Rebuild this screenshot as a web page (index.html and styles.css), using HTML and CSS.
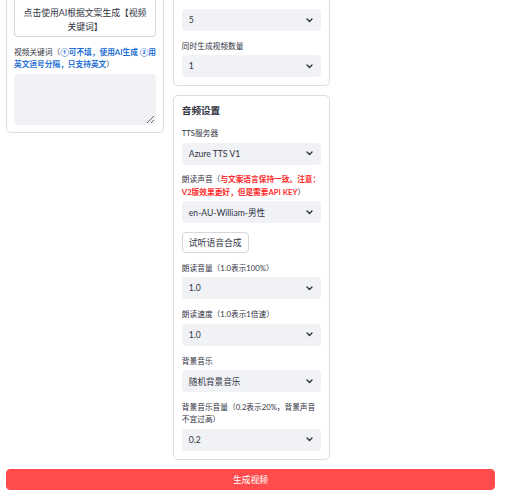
FILE: index.html
```html
<!DOCTYPE html>
<html lang="zh">
<head>
<meta charset="utf-8">
<title>视频生成</title>
<link rel="stylesheet" href="styles.css">
</head>
<body>
<div class="page">
  <div class="cols">
    <div class="col">
      <div class="card cut left-card">
        <button class="btn cut-btn">点击使用AI根据文案生成【视频<br>关键词】</button>
        <div class="field">
          <label class="lbl">视频关键词（<span class="blue">①可不填，使用AI生成 ②用<br>英文逗号分隔，只支持英文</span>）</label>
          <textarea class="ta"></textarea>
        </div>
      </div>
    </div>
    <div class="col stack">
      <div class="card cut first-cut">
        <div class="select"><span>5</span><svg class="chev" viewBox="0 0 7 5" width="7" height="5"><path d="M1 1L3.5 3.5L6 1"/></svg></div>
        <div class="field">
          <label class="lbl">同时生成视频数量</label>
          <div class="select"><span>1</span><svg class="chev" viewBox="0 0 7 5" width="7" height="5"><path d="M1 1L3.5 3.5L6 1"/></svg></div>
        </div>
      </div>
      <div class="card">
        <div class="title">音频设置</div>
        <div class="field">
          <label class="lbl">TTS服务器</label>
          <div class="select"><span>Azure TTS V1</span><svg class="chev" viewBox="0 0 7 5" width="7" height="5"><path d="M1 1L3.5 3.5L6 1"/></svg></div>
        </div>
        <div class="field">
          <label class="lbl">朗读声音（<span class="red">与文案语言保持一致。注意：<br>V2版效果更好，但是需要API KEY</span>）</label>
          <div class="select"><span>en-AU-William-男性</span><svg class="chev" viewBox="0 0 7 5" width="7" height="5"><path d="M1 1L3.5 3.5L6 1"/></svg></div>
        </div>
        <div class="row">
          <button class="btn small">试听语音合成</button>
        </div>
        <div class="field">
          <label class="lbl">朗读音量（1.0表示100%）</label>
          <div class="select"><span>1.0</span><svg class="chev" viewBox="0 0 7 5" width="7" height="5"><path d="M1 1L3.5 3.5L6 1"/></svg></div>
        </div>
        <div class="field">
          <label class="lbl">朗读速度（1.0表示1倍速）</label>
          <div class="select"><span>1.0</span><svg class="chev" viewBox="0 0 7 5" width="7" height="5"><path d="M1 1L3.5 3.5L6 1"/></svg></div>
        </div>
        <div class="field">
          <label class="lbl">背景音乐</label>
          <div class="select"><span>随机背景音乐</span><svg class="chev" viewBox="0 0 7 5" width="7" height="5"><path d="M1 1L3.5 3.5L6 1"/></svg></div>
        </div>
        <div class="field">
          <label class="lbl">背景音乐音量（0.2表示20%，背景声音<br>不宜过高）</label>
          <div class="select"><span>0.2</span><svg class="chev" viewBox="0 0 7 5" width="7" height="5"><path d="M1 1L3.5 3.5L6 1"/></svg></div>
        </div>
      </div>
    </div>
    <div class="col"></div>
  </div>
  <button class="primary">生成视频</button>
</div>
</body>
</html>
```

FILE: styles.css
```css
html, body {
  margin: 0;
  padding: 0;
  background: #ffffff;
}
body {
  font-family: Lato, "Noto Sans CJK SC", sans-serif;
  color: #31333f;
}
.page {
  padding: 0 11px 0 6px;
}
.cols {
  display: grid;
  grid-template-columns: repeat(3, 1fr);
  column-gap: 8.8px;
  align-items: start;
}
.stack {
  display: flex;
  flex-direction: column;
  gap: 9px;
}
.card {
  border: 1px solid #dcdde2;
  border-radius: 5px;
  padding: 8px;
  display: flex;
  flex-direction: column;
  gap: 8.8px;
}
.card.cut {
  border-top: none;
  border-top-left-radius: 0;
  border-top-right-radius: 0;
}
.left-card {
  padding: 0 7px 7px 7px;
}
.first-cut {
  padding-top: 9px;
}
.field {
  display: flex;
  flex-direction: column;
}
.lbl {
  font-size: 7.7px;
  line-height: 12.5px;
  margin-bottom: 3px;
  color: #31333f;
  white-space: nowrap;
}
.blue {
  color: #1f6fd6;
  font-weight: 700;
}
.red {
  color: #ff2b2b;
  font-weight: 700;
}
.title {
  font-size: 9.6px;
  line-height: 14px;
  font-weight: 700;
}
.select {
  height: 22px;
  background: #f0f2f6;
  border-radius: 4px;
  display: flex;
  align-items: center;
  justify-content: space-between;
  padding: 0 8px 0 7px;
  font-size: 8.6px;
  box-sizing: border-box;
}
.chev path {
  fill: none;
  stroke: #31333f;
  stroke-width: 1.4;
  stroke-linecap: round;
  stroke-linejoin: round;
}
.btn {
  font-family: inherit;
  color: #31333f;
  background: #ffffff;
  border: 1px solid #d6d7db;
  border-radius: 4px;
  font-size: 8.8px;
  line-height: 14px;
  margin: 0;
}
.cut-btn {
  width: 100%;
  border-top: none;
  border-top-left-radius: 0;
  border-top-right-radius: 0;
  padding: 6px 4px 2px 4px;
  text-align: center;
}
.row {
  display: flex;
}
.small {
  height: 21px;
  padding: 0 6px;
}
.ta {
  display: block;
  width: 100%;
  height: 51px;
  box-sizing: border-box;
  background: #f0f2f6;
  border: 1px solid #f0f2f6;
  border-radius: 4px;
  resize: vertical;
  margin: 0;
}
.primary {
  display: block;
  width: 100%;
  height: 21px;
  margin-top: 9px;
  background: #ff4b4b;
  border: 1px solid #ff4b4b;
  border-radius: 4px;
  color: #ffffff;
  font-family: inherit;
  font-size: 8.8px;
  padding: 0;
}
```
